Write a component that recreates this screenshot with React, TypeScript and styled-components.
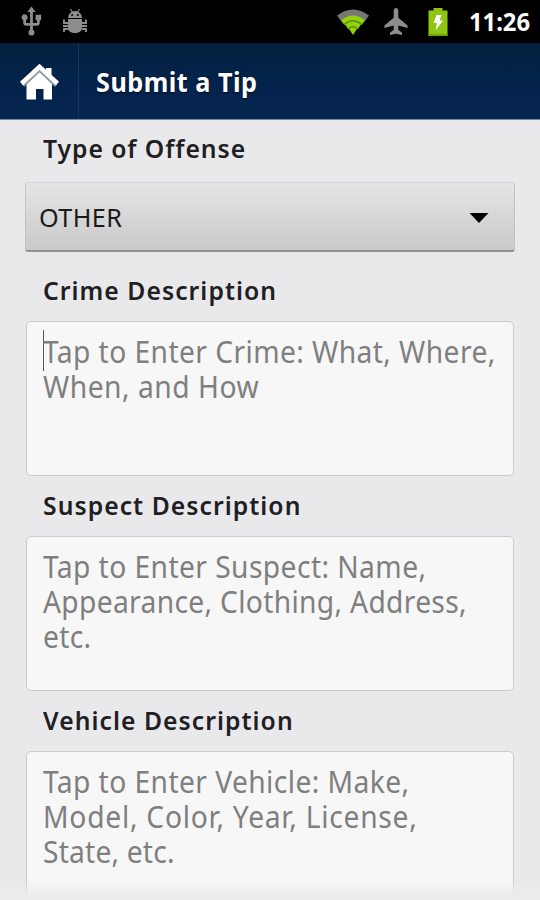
import React from 'react';
import styled, { createGlobalStyle } from 'styled-components';
import { MdUsb } from 'react-icons/md';

const GlobalStyle = createGlobalStyle`
  * {
    box-sizing: border-box;
  }

  body {
    margin: 0;
    font-family: 'Noto Sans', 'Open Sans', sans-serif;
  }
`;

const Screen = styled.div`
  position: relative;
  display: flex;
  flex-direction: column;
  width: 540px;
  height: 900px;
  overflow: hidden;
  background: #e9e9eb;
`;

const StatusBar = styled.div`
  display: flex;
  align-items: center;
  flex: none;
  height: 43px;
  padding: 0 10px 0 15px;
  background: #000;
  color: #8d8d8d;

  svg {
    flex: none;
    display: block;
  }
`;

const StatusGroup = styled.div<{ $gap: number }>`
  display: flex;
  align-items: center;
  gap: ${(p) => p.$gap}px;
`;

const Spacer = styled.div`
  flex: 1;
`;

const Clock = styled.div`
  width: 61px;
  margin-left: 21px;
  color: #fff;
  font-size: 25px;
  font-weight: 700;
  line-height: 43px;
  white-space: nowrap;
`;

const Header = styled.div`
  display: flex;
  flex: none;
  height: 77px;
  background: linear-gradient(#03203f, #04244d 60%, #05264f);
  border-bottom: 1px solid #7d8797;
`;

const HomeButton = styled.div`
  display: flex;
  align-items: center;
  width: 79px;
  padding: 2px 0 0 19px;
  border-right: 1px solid #17365c;
`;

const Text = styled.span<{ $x?: number; $track?: number }>`
  display: inline-block;
  letter-spacing: ${(p) => p.$track ?? 0}px;
  transform: scaleX(${(p) => p.$x ?? 1});
  transform-origin: 0 50%;
  white-space: pre;
`;

const Title = styled.div`
  padding-left: 17px;
  color: #fff;
  font-size: 26px;
  font-weight: 700;
  line-height: 78px;
  text-shadow: 0 1px 2px #000a1c;
`;

const Form = styled.div`
  display: flex;
  flex-direction: column;
  padding: 0 26px;
`;

const Label = styled.div<{ $top: number; $bottom: number }>`
  height: 36px;
  margin: ${(p) => p.$top}px 0 ${(p) => p.$bottom}px;
  padding-left: 17px;
  color: #1f2023;
  font-size: 26px;
  font-weight: 600;
  line-height: 35px;
`;

const Spinner = styled.div`
  display: flex;
  align-items: center;
  justify-content: space-between;
  height: 70px;
  margin: 0 -1px;
  padding: 1px 25px 0 13px;
  border: 1px solid #c3c3c3;
  border-top-color: #d4d4d4;
  border-bottom: 2px solid #929292;
  border-radius: 3px;
  background: linear-gradient(#e5e5e5, #c9c9c9);
  color: #1a1a1a;
  font-size: 26px;
  line-height: 35px;

  svg {
    margin-top: 2px;
  }
`;

const TextBox = styled.div`
  display: flex;
  flex-direction: column;
  align-items: flex-start;
  width: 488px;
  height: 155px;
  padding: 12px 16px;
  border: 1px solid #cbcbcb;
  border-radius: 5px;
  background: #f7f7f7;
  color: #7f7f7f;
  font-size: 30px;
  line-height: 35px;
`;

const Caret = styled.span`
  position: absolute;
  width: 1px;
  height: 41px;
  margin-top: -4px;
  background: #555;
`;

const BottomFade = styled.div`
  position: absolute;
  right: 0;
  bottom: 0;
  left: 0;
  height: 20px;
  background: linear-gradient(rgba(236, 236, 238, 0), #ececee 80%);
`;

const BugIcon = () => (
  <svg width="26" height="26" viewBox="0 0 26 26" fill="#8d8d8d">
    <path d="M6 9a7 7 0 0 1 14 0z" />
    <path d="M8.500 0l2.200 3.500M17.500 0l-2.200 3.500" stroke="#8d8d8d" strokeWidth="1.200" />
    <circle cx="10.200" cy="6" r="1" fill="#000" />
    <circle cx="15.800" cy="6" r="1" fill="#000" />
    <path d="M6 10h14v9c0 3.500-3 5-7 5s-7-1.500-7-5z" />
    <path
      d="M6 14H2V10.500M6 17H1M6 20H2V23M20 14h4V10.500M20 17h5M20 20h4V23"
      fill="none"
      stroke="#8d8d8d"
      strokeWidth="1.900"
    />
  </svg>
);

const WifiIcon = () => (
  <svg width="32" height="26" viewBox="0 0 32 26">
    <path d="M0 6.500Q16-5.500 32 6.500L28 12Q16 3 4 12z" fill="#777" />
    <path d="M4 11.500Q16 1.500 28 11.500L25 15.500 23.500 16 21 20 19.500 20.500 16 26 12.500 20.500 11 20 8.500 16 7 15.500z" fill="#93d20d" />
    <path d="M7 15.500Q16 8 25 15.500M11 20Q16 15.500 21 20" fill="none" stroke="#5d9200" strokeWidth="1.300" />
  </svg>
);

const PlaneIcon = () => (
  <svg width="24" height="27" viewBox="0 0 24 27" fill="#8d8d8d">
    <path d="M12 0c1.500 0 2.300 1.500 2.300 3.200v6.600l9.300 7.700v2.500L14.300 17.500v4.300l3.700 3V27l-6-1.200L6 27v-2.200l3.700-3v-4.300L.4 20v-2.500l9.300-7.700V3.200C9.700 1.500 10.500 0 12 0z" />
  </svg>
);

const BatteryIcon = () => (
  <svg width="20" height="28" viewBox="0 0 20 28">
    <path d="M5.500 0h9v2.500h5V28H.5V2.500h5z" fill="#8fc611" />
    <path d="M.5 26h19v2H.5z" fill="#6fa300" />
    <path d="M8.500 7h5l-2 5.500h3.500L7.500 22.500l1.500-7.500H5.500z" fill="#fff" />
  </svg>
);

const HomeIcon = () => (
  <svg width="41" height="38" viewBox="0 0 41 38">
    <path d="M27 5h5.500v11H27z" fill="#fff" />
    <path d="M7.500 18.500L20.500 6.500l12.500 12V36.500h-8.500V26h-7.500v10.500H7.500z" fill="#fff" />
    <path d="M4 22.500L20.500 7 37 22.500" fill="none" stroke="#8f98a8" strokeWidth="3.500" />
    <path d="M2.500 20.500L20.500 3.800l18 16.700" fill="none" stroke="#fff" strokeWidth="4.500" />
  </svg>
);

const Arrow = () => (
  <svg width="20" height="10" viewBox="0 0 20 10">
    <path d="M.5 0h19L10 10z" fill="#000" />
  </svg>
);

const fields = [
  {
    label: 'Crime Description',
    lines: [
      { text: 'Tap to Enter Crime: What, Where,', track: 0.45 },
      { text: 'When, and How', track: 0.55 },
    ],
    focused: true,
  },
  {
    label: 'Suspect Description',
    lines: [
      { text: 'Tap to Enter Suspect: Name,', track: 0.45 },
      { text: 'Appearance, Clothing, Address,', track: 0.35 },
      { text: 'etc.', track: 0.3 },
    ],
  },
  {
    label: 'Vehicle Description',
    lines: [
      { text: 'Tap to Enter Vehicle: Make,', track: 0.45 },
      { text: 'Model, Color, Year, License,', track: 0.8 },
      { text: 'State, etc.', track: 0.2 },
    ],
  },
];

export default function App() {
  return (
    <>
      <GlobalStyle />
      <Screen>
        <StatusBar>
          <StatusGroup $gap={14}>
            <MdUsb size={33} />
            <BugIcon />
          </StatusGroup>
          <Spacer />
          <StatusGroup $gap={20}>
            <StatusGroup $gap={15}>
              <WifiIcon />
              <PlaneIcon />
            </StatusGroup>
            <BatteryIcon />
          </StatusGroup>
          <Clock>
            <Text $x={0.95}>11:26</Text>
          </Clock>
        </StatusBar>

        <Header>
          <HomeButton>
            <HomeIcon />
          </HomeButton>
          <Title>
            <Text $x={0.97} $track={0.5}>Submit a Tip</Text>
          </Title>
        </Header>

        <Form>
          <Label $top={11} $bottom={15}>
            <Text $x={0.95} $track={1}>Type of Offense</Text>
          </Label>
          <Spinner>
            <Text $x={0.97} $track={0.4}>OTHER</Text>
            <Arrow />
          </Spinner>

          {fields.map((f, i) => (
            <React.Fragment key={f.label}>
              <Label $top={i === 0 ? 21 : 12} $bottom={12}>
                <Text $x={0.95} $track={1.1}>{f.label}</Text>
              </Label>
              <TextBox>
                {f.focused && <Caret />}
                {f.lines.map((line) => (
                  <Text key={line.text} $x={0.94} $track={line.track}>
                    {line.text}
                  </Text>
                ))}
              </TextBox>
            </React.Fragment>
          ))}
        </Form>
        <BottomFade />
      </Screen>
    </>
  );
}
